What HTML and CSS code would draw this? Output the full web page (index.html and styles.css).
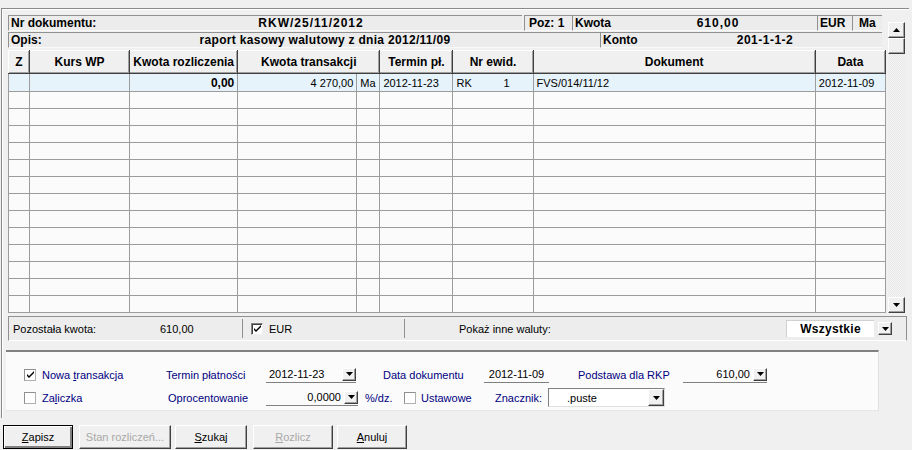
FILE: index.html
```html
<!DOCTYPE html>
<html lang="pl">
<head>
<meta charset="utf-8">
<title>Rozliczenia</title>
<link rel="stylesheet" href="styles.css">
</head>
<body>
<div class="win">
  <div class="frame">
    <div class="main">
      <div class="leftcol">
        <div class="hdr">
          <div class="hrow">
            <div class="hc c-nr"><span class="lbl lbl-nr">Nr dokumentu:</span><span class="val val-nr">RKW/25/11/2012</span></div>
            <div class="hc c-poz">Poz: 1</div>
            <div class="hc c-kw"><span class="lbl lbl-kw">Kwota</span><span class="val val-kw">610,00</span></div>
            <div class="hc c-eur">EUR</div>
            <div class="hc c-ma">Ma</div>
          </div>
          <div class="hrow">
            <div class="hc c-opis"><span class="lbl lbl-opis">Opis:</span><span class="val val-opis">raport kasowy walutowy z dnia 2012/11/09</span></div>
            <div class="hc c-konto"><span class="lbl lbl-konto">Konto</span><span class="val val-konto">201-1-1-2</span></div>
          </div>
        </div>

        <table class="grid">
          <colgroup>
            <col class="w-z"><col class="w-kurs"><col class="w-rozl"><col class="w-trans"><col class="w-ma"><col class="w-term"><col class="w-ewid"><col class="w-dok"><col class="w-data">
          </colgroup>
          <thead>
            <tr>
              <th>Z</th><th>Kurs WP</th><th>Kwota rozliczenia</th><th colspan="2">Kwota transakcji</th><th>Termin pł.</th><th>Nr ewid.</th><th>Dokument</th><th>Data</th>
            </tr>
          </thead>
          <tbody>
            <tr class="sel">
              <td></td><td></td><td class="r b">0,00</td><td class="r">4 270,00</td><td>Ma</td><td>2012-11-23</td><td class="ewid"><span>RK</span><span>1</span></td><td>FVS/014/11/12</td><td>2012-11-09</td>
            </tr>
            <tr><td></td><td></td><td></td><td></td><td></td><td></td><td></td><td></td><td></td></tr>
            <tr><td></td><td></td><td></td><td></td><td></td><td></td><td></td><td></td><td></td></tr>
            <tr><td></td><td></td><td></td><td></td><td></td><td></td><td></td><td></td><td></td></tr>
            <tr><td></td><td></td><td></td><td></td><td></td><td></td><td></td><td></td><td></td></tr>
            <tr><td></td><td></td><td></td><td></td><td></td><td></td><td></td><td></td><td></td></tr>
            <tr><td></td><td></td><td></td><td></td><td></td><td></td><td></td><td></td><td></td></tr>
            <tr><td></td><td></td><td></td><td></td><td></td><td></td><td></td><td></td><td></td></tr>
            <tr><td></td><td></td><td></td><td></td><td></td><td></td><td></td><td></td><td></td></tr>
            <tr><td></td><td></td><td></td><td></td><td></td><td></td><td></td><td></td><td></td></tr>
            <tr><td></td><td></td><td></td><td></td><td></td><td></td><td></td><td></td><td></td></tr>
            <tr><td></td><td></td><td></td><td></td><td></td><td></td><td></td><td></td><td></td></tr>
            <tr><td></td><td></td><td></td><td></td><td></td><td></td><td></td><td></td><td></td></tr>
            <tr><td></td><td></td><td></td><td></td><td></td><td></td><td></td><td></td><td></td></tr>
          </tbody>
        </table>
      </div>
      <div class="vscroll">
        <div class="sbtn"><svg width="7" height="4" viewBox="0 0 7 4"><path d="M3.5 0 L7 4 L0 4 Z" fill="#000"/></svg></div>
        <div class="thumb"></div>
        <div class="track"></div>
        <div class="sbtn"><svg width="7" height="4" viewBox="0 0 7 4"><path d="M0 0 L7 0 L3.5 4 Z" fill="#000"/></svg></div>
      </div>
    </div>

    <div class="status">
      <div class="st-left"><span class="st-lbl">Pozostała kwota:</span><span class="st-val">610,00</span></div>
      <div class="st-mid"><span class="chk3d"><svg width="9" height="9" viewBox="0 0 9 9"><path d="M1 4 L3 6 L8 1 L8 3 L3 8 L1 6 Z" fill="#000"/></svg></span><span>EUR</span></div>
      <div class="st-right">
        <span class="st-inne">Pokaż inne waluty:</span>
        <span class="wszystkie">Wszystkie</span>
        <span class="ddbtn dd-wsz"><svg width="7" height="4" viewBox="0 0 7 4"><path d="M0 0 L7 0 L3.5 4 Z" fill="#000"/></svg></span>
      </div>
    </div>

    <div class="panel">
      <div class="prow">
        <label class="cb cb-nowa"><span class="chk"><svg width="9" height="9" viewBox="0 0 9 9"><path d="M1 4 L3 6 L8 1 L8 3 L3 8 L1 6 Z" fill="#000"/></svg></span><span>Nowa <u>t</u>ransakcja</span></label>
        <span class="plbl l-termin">Termin płatności</span>
        <span class="fld f-termin"><span class="fv">2012-11-23</span><span class="ddbtn"><svg width="7" height="4" viewBox="0 0 7 4"><path d="M0 0 L7 0 L3.5 4 Z" fill="#000"/></svg></span></span>
        <span class="plbl l-data">Data dokumentu</span>
        <span class="fld f-data"><span class="fv">2012-11-09</span></span>
        <span class="plbl l-pods">Podstawa dla RKP</span>
        <span class="fld f-pods"><span class="fv fv-r">610,00</span><span class="ddbtn"><svg width="7" height="4" viewBox="0 0 7 4"><path d="M0 0 L7 0 L3.5 4 Z" fill="#000"/></svg></span></span>
      </div>
      <div class="prow">
        <label class="cb cb-zal"><span class="chk"></span><span>Za<u>l</u>iczka</span></label>
        <span class="plbl l-opr">Oprocentowanie</span>
        <span class="fld f-opr"><span class="fv fv-r">0,0000</span><span class="ddbtn"><svg width="7" height="4" viewBox="0 0 7 4"><path d="M0 0 L7 0 L3.5 4 Z" fill="#000"/></svg></span></span>
        <span class="plbl l-dz">%/dz.</span>
        <label class="cb cb-ust"><span class="chk"></span><span>Ustawowe</span></label>
        <span class="plbl l-zn">Znacznik:</span>
        <span class="combo"><span class="cv">.puste</span><span class="ddbtn"><svg width="7" height="4" viewBox="0 0 7 4"><path d="M0 0 L7 0 L3.5 4 Z" fill="#000"/></svg></span></span>
      </div>
    </div>
  </div>

  <div class="buttons">
    <button class="btn btn-def b-zap"><u>Z</u>apisz</button>
    <button class="btn dis b-stan">Stan rozliczeń...</button>
    <button class="btn b-szu"><u>S</u>zukaj</button>
    <button class="btn dis b-roz"><u>R</u>ozlicz</button>
    <button class="btn b-anu"><u>A</u>nuluj</button>
  </div>
</div>
</body>
</html>
```

FILE: styles.css
```css
* { box-sizing: border-box; }
html, body { margin: 0; padding: 0; }
body {
  background: #f0f0f0;
  font-family: "Liberation Sans", Arial, sans-serif;
  font-size: 11px;
  color: #000;
}
.win {
  width: 912px;
  height: 450px;
  padding-top: 8px;
  overflow: hidden;
}
.frame {
  margin-left: 1px;
  width: 908px;
  height: 410px;
  border-top: 1px solid #8a8a8a;
  border-left: 1px solid #8a8a8a;
  box-shadow: inset 1px 1px 0 #ffffff;
  padding: 6px 0 0 6px;
}
.main { display: flex; align-items: flex-start; }
.leftcol { width: 878px; display: flex; flex-direction: column; }

/* header rows */
.hdr { display: flex; flex-direction: column; gap: 1px; width: 874px; }
.hrow { display: flex; height: 16px; }
.hc {
  display: flex;
  align-items: center;
  height: 16px;
  background: #ececec;
  border-top: 1px solid #909090;
  border-left: 1px solid #909090;
  border-bottom: 1px solid #fafafa;
  font-weight: bold;
  font-size: 12px;
  white-space: nowrap;
}
.lbl { padding-left: 2px; }
.val { text-align: center; }
.c-nr { width: 514px; }
.lbl-nr { width: 92px; }
.val-nr { width: 420px; letter-spacing: 1px; }
.c-poz { width: 48px; padding-left: 4px; margin-left: 2px; }
.c-kw { width: 245px; }
.lbl-kw { width: 102px; }
.val-kw { width: 86px; letter-spacing: 1px; }
.c-eur { width: 35px; padding-left: 2px; }
.c-ma { width: 30px; padding-left: 6px; }
.c-opis { width: 592px; }
.lbl-opis { width: 186px; }
.val-opis { width: 260px; letter-spacing: 0.3px; }
.c-konto { width: 282px; }
.lbl-konto { width: 134px; }
.val-konto { width: 60px; letter-spacing: 0.5px; }

/* grid */
.grid {
  margin-top: 2px;
  table-layout: fixed;
  border-collapse: collapse;
  width: 878px;
  border-left: 1px solid #606060;
  border-top: 1px solid #606060;
  border-bottom: 1px solid #808080;
  background: #fbfbfb;
}
.w-z { width: 21px; }
.w-kurs { width: 100px; }
.w-rozl { width: 108px; }
.w-trans { width: 119px; }
.w-ma { width: 23px; }
.w-term { width: 73px; }
.w-ewid { width: 80px; }
.w-dok { width: 282px; }
.w-data { width: 70px; }
.grid th {
  height: 23px;
  padding: 0;
  font-weight: bold;
  font-size: 12px;
  text-align: center;
  background: #f0f0f0;
  border-top: 1px solid #ffffff;
  border-left: 1px solid #ffffff;
  border-right: 1px solid #404040;
  border-bottom: 1px solid #404040;
  box-shadow: inset -1px -1px 0 #a0a0a0;
}
.grid td {
  height: 17px;
  padding: 0 3px;
  border: 1px solid #9c9c9c;
  white-space: nowrap;
  overflow: hidden;
}
.grid tr.sel td { background: #e6f3fb; height: 18px; padding-top: 0; }
.grid td.r { text-align: right; }
.grid td.b { font-weight: bold; font-size: 12px; }
.grid td.ewid span:last-child { float: right; margin-right: 20px; }

.vscroll {
  width: 17px;
  margin-left: 2px;
  margin-top: 7px;
  height: 291px;
  display: flex;
  flex-direction: column;
  background: repeating-conic-gradient(#f6f6f6 0 25%, #e6e6e6 0 50%) 0 0 / 2px 2px;
}
.sbtn, .thumb {
  background: #f0f0f0;
  border-top: 1px solid #ffffff;
  border-left: 1px solid #ffffff;
  border-right: 1px solid #404040;
  border-bottom: 1px solid #404040;
  box-shadow: inset -1px -1px 0 #a0a0a0;
}
.sbtn {
  height: 16px;
  display: flex;
  align-items: center;
  justify-content: center;
}
.thumb { height: 16px; }
.track { flex: 1; }

/* status bar */
.status {
  display: flex;
  align-items: center;
  margin-top: 3px;
  width: 899px;
  height: 25px;
  border-top: 1px solid #909090;
  border-left: 1px solid #909090;
  border-right: 1px solid #909090;
  border-bottom: 1px solid #ffffff;
  background: #ededed;
}
.st-left { width: 233px; display: flex; padding-left: 4px; }
.st-lbl { width: 147px; }
.st-mid {
  width: 162px;
  height: 19px;
  display: flex;
  align-items: center;
  gap: 6px;
  padding-left: 8px;
  border-left: 1px solid #909090;
}
.st-right {
  flex: 1;
  height: 19px;
  display: flex;
  align-items: center;
  border-left: 1px solid #909090;
  padding-left: 54px;
}
.st-inne { width: 327px; }
.wszystkie {
  width: 88px;
  height: 17px;
  background: #ffffff;
  border-top: 1px solid #d0d0d0;
  border-left: 1px solid #d0d0d0;
  font-weight: bold;
  font-size: 12px;
  text-align: center;
  line-height: 16px;
  letter-spacing: 0.3px;
}
.dd-wsz { margin-left: 4px; width: 15px; height: 15px; border: 1px solid #404040; box-shadow: inset 1px 1px 0 #fff, inset -1px -1px 0 #a0a0a0; }

.chk3d {
  width: 12px;
  height: 12px;
  background: #fff;
  border-top: 1px solid #808080;
  border-left: 1px solid #808080;
  border-right: 1px solid #f0f0f0;
  border-bottom: 1px solid #f0f0f0;
  box-shadow: inset 1px 1px 0 #404040;
  display: flex;
  align-items: center;
  justify-content: center;
}

/* lower panel */
.panel {
  margin-top: 9px;
  margin-left: -2px;
  width: 873px;
  height: 61px;
  background: #fbfbfb;
  border-top: 2px solid #808080;
  border-right: 1px solid #e0e0e0;
  border-bottom: 1px solid #e6e6e6;
  padding: 14px 0 0 18px;
  display: flex;
  flex-direction: column;
  gap: 6px;
}
.prow { display: flex; align-items: center; height: 17px; }
.cb { display: flex; align-items: center; gap: 6px; color: #000080; }
.chk {
  width: 12px;
  height: 12px;
  background: #fff;
  border: 1px solid #b0b0b0;
  border-top-color: #909090;
  border-left-color: #909090;
  display: flex;
  align-items: center;
  justify-content: center;
}
.plbl { color: #000080; }
.fld {
  display: flex;
  align-items: center;
  height: 16px;
  border-bottom: 1px solid #808080;
}
.fv { padding-left: 3px; }
.fv-r { flex: 1; text-align: right; padding-right: 3px; }
.ddbtn {
  width: 14px;
  height: 13px;
  display: inline-flex;
  align-items: center;
  justify-content: center;
  background: #f0f0f0;
  border-top: 1px solid #ffffff;
  border-left: 1px solid #ffffff;
  border-right: 1px solid #404040;
  border-bottom: 1px solid #404040;
  box-shadow: inset -1px -1px 0 #a0a0a0;
}
.cb-nowa { width: 142px; }
.l-termin { width: 100px; }
.f-termin { width: 90px; justify-content: space-between; }
.l-data { margin-left: 27px; width: 101px; }
.f-data { width: 65px; justify-content: center; }
.f-data .fv { padding: 0; }
.l-pods { margin-left: 29px; width: 105px; }
.f-pods { width: 84px; }
.cb-zal { width: 144px; }
.l-opr { width: 98px; }
.f-opr { width: 92px; }
.l-dz { margin-left: 7px; width: 39px; }
.cb-ust { width: 91px; gap: 5px; }
.l-zn { width: 53px; }
.combo {
  width: 117px;
  height: 19px;
  display: flex;
  align-items: center;
  background: #fff;
  border-top: 1px solid #808080;
  border-left: 1px solid #808080;
  border-right: 1px solid #e0e0e0;
  border-bottom: 1px solid #e0e0e0;
}
.cv { flex: 1; padding-left: 18px; }
.combo .ddbtn { height: 17px; width: 16px; }

/* buttons */
.buttons {
  display: flex;
  padding: 7px 0 0 3px;
  gap: 4px;
}
.btn {
  font-family: "Liberation Sans", Arial, sans-serif;
  font-size: 11px;
  height: 24px;
  padding: 0;
  margin: 0;
  background: #f0f0f0;
  color: #000;
  border-top: 1px solid #ffffff;
  border-left: 1px solid #ffffff;
  border-right: 1px solid #404040;
  border-bottom: 1px solid #404040;
  box-shadow: inset -1px -1px 0 #a0a0a0;
}
.btn-def {
  border: 1px solid #000;
  box-shadow: inset 1px 1px 0 #fff, inset -2px -2px 0 #808080;
}
.dis { color: #a8a8a8; }
.b-zap { width: 70px; }
.b-stan { width: 92px; margin-left: 2px; }
.b-szu { width: 72px; }
.b-roz { width: 80px; margin-left: 2px; }
.b-anu { width: 70px; }
```
